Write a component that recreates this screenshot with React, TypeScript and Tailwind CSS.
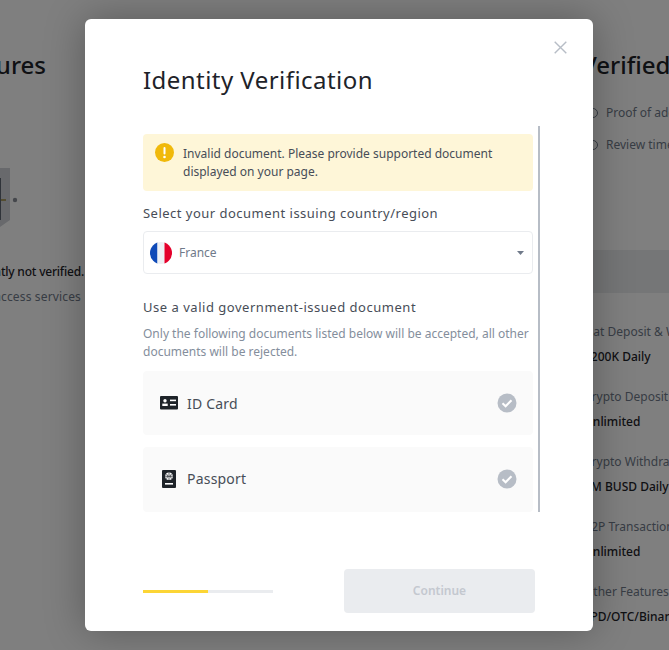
function Check() {
  return (
    <svg width="20" height="20" viewBox="0 0 20 20" className="shrink-0">
      <circle cx="10" cy="10" r="9.5" fill="#b7bdc6" />
      <path d="M5.5 10.2l3.1 3 5.9-6" fill="none" stroke="#fff" strokeWidth="2.1" />
    </svg>
  );
}

function DocRow({ icon, label, h }: { icon: React.ReactNode; label: string; h: string }) {
  return (
    <div className={`flex items-center rounded-[4px] bg-[#fafafa] pl-[17px] pr-[16px] shrink-0 ${h}`}>
      <span className="flex w-[18px] justify-center">{icon}</span>
      <span className="ml-[9px] flex-1 text-[14px] tracking-[0.2px] text-[#474d57]">{label}</span>
      <Check />
    </div>
  );
}

function Stat({ label, value }: { label: string; value: string }) {
  return (
    <div className="flex h-[65px] flex-col whitespace-nowrap">
      <span className="h-[25px] text-[12px] leading-[20px] text-[#707a8a]">{label}</span>
      <span className="text-[12px] font-medium leading-[20px] text-[#1e2329]">{value}</span>
    </div>
  );
}

function Bullet({ label }: { label: string }) {
  return (
    <span className="flex items-center gap-[8px]">
      <span className="h-[10px] w-[10px] shrink-0 rounded-full border border-[#707a8a]" />
      {label}
    </span>
  );
}

export default function App() {
  return (
    <div className="relative h-[650px] w-[669px] overflow-hidden bg-white font-['Noto_Sans','Liberation_Sans',sans-serif]">
      <div className="flex h-full justify-between">
        <div className="flex w-[85px] flex-col items-end overflow-hidden whitespace-nowrap">
          <h2 className="mr-[39px] mt-[49px] text-[24px] font-medium leading-[32px] text-[#1e2329]">Features</h2>
          <div className="mr-[67px] mt-[87px] h-[62px] w-[18px]">
            <svg width="18" height="62" viewBox="0 0 18 62">
              <path d="M0 0H10V52L0 59Z" fill="#d0d3d8" />
              <rect x="0" y="10" width="1" height="42" fill="#5e6673" />
              <rect x="1" y="31" width="5" height="2" fill="#a89a60" />
              <circle cx="15" cy="32" r="2.2" fill="#8a8f98" />
            </svg>
          </div>
          <p className="mr-[1px] mt-[32px] text-[12px] font-medium leading-[20px] tracking-[-0.2px] text-[#1e2329]">You are currently not verified.</p>
          <p className="mr-[4px] mt-[5px] text-[12px] leading-[20px] tracking-[0.15px] text-[#707a8a]">You can access services</p>
        </div>
        <div className="flex w-[110px] flex-col overflow-hidden whitespace-nowrap">
          <h2 className="ml-[23px] mt-[49px] text-[24px] font-medium leading-[32px] text-[#1e2329]">Verified</h2>
          <div className="ml-[29px] mt-[22px] flex flex-col gap-[12px] text-[12px] leading-[20px] text-[#707a8a]">
            <Bullet label="Proof of address" />
            <Bullet label="Review time" />
          </div>
          <div className="mt-[95px] h-[43px] w-full shrink-0 bg-[#eaecef]" />
          <div className="ml-[25px] mt-[29px] flex flex-col">
            <Stat label="Fiat Deposit & Withdraw" value="$200K Daily" />
            <Stat label="Crypto Deposit" value="Unlimited" />
            <Stat label="Crypto Withdrawal" value="8M BUSD Daily" />
            <Stat label="P2P Transaction" value="Unlimited" />
            <Stat label="Other Features" value="LPD/OTC/Binance" />
          </div>
        </div>
      </div>

      <div className="absolute inset-0 bg-black/50" />

      <div className="absolute left-[85px] top-[19px] flex h-[612px] w-[508px] flex-col rounded-[6px] bg-white pl-[58px] shadow-[0_0_40px_rgba(0,0,0,0.3)]">
        <button className="absolute right-[26px] top-[22px] text-[#b7bdc6]" aria-label="Close">
          <svg width="13" height="13" viewBox="0 0 13 13"><path d="M.7.7l11.6 11.6M12.3.7L.7 12.3" stroke="currentColor" strokeWidth="1.4" fill="none" /></svg>
        </button>
        <h1 className="mt-[43px] h-[36px] text-[24px] font-normal leading-[36px] tracking-[0.45px] text-[#1e2329]">Identity Verification</h1>
        <div className="mt-[28px] flex h-[386px] w-[397px] flex-col overflow-hidden border-r-2 border-[#b7bdc6] pr-[5px] pt-[8px]">
          <div className="flex h-[57px] shrink-0 rounded-[4px] bg-[#fef6d8] pl-[12px] pr-[10px] pt-[9px]">
            <svg width="19" height="19" viewBox="0 0 19 19" className="shrink-0">
              <circle cx="9.5" cy="9.5" r="9.5" fill="#f0b90b" />
              <rect x="8.5" y="4" width="2" height="7.5" rx="1" fill="#fff" />
              <circle cx="9.5" cy="14" r="1.3" fill="#fff" />
            </svg>
            <p className="ml-[9px] mt-[2px] text-[12px] leading-[18px] text-[#474d57]">Invalid document. Please provide supported document displayed on your page.</p>
          </div>
          <p className="mt-[12px] text-[13px] leading-[20px] tracking-[0.48px] text-[#474d57]">Select your document issuing country/region</p>
          <div className="mt-[8px] flex h-[43px] shrink-0 items-center rounded-[4px] border border-[#eaecef] pl-[6px] pr-[8px]">
            <svg width="22" height="22" viewBox="0 0 22 22" className="shrink-0">
              <defs><clipPath id="flag"><circle cx="11" cy="11" r="11" /></clipPath></defs>
              <g clipPath="url(#flag)">
                <rect width="7.5" height="22" fill="#0f4ab8" />
                <rect x="7.5" width="7" height="22" fill="#eef0f4" />
                <rect x="14.5" width="7.5" height="22" fill="#e4002b" />
              </g>
            </svg>
            <span className="ml-[7px] flex-1 text-[12px] text-[#707a8a]">France</span>
            <svg width="7" height="4" viewBox="0 0 7 4"><path d="M0 0h7L3.5 4z" fill="#707a8a" /></svg>
          </div>
          <p className="mt-[23px] text-[13px] leading-[20px] tracking-[0.52px] text-[#474d57]">Use a valid government-issued document</p>
          <p className="mt-[8px] text-[12px] leading-[18px] text-[#848e9c]">Only the following documents listed below will be accepted, all other documents will be rejected.</p>
          <div className="mt-[10px] flex flex-col gap-[12px]">
            <DocRow
              h="h-[64px]"
              label="ID Card"
              icon={
                <svg width="18" height="14" viewBox="0 0 18 14">
                  <rect width="18" height="13.5" rx="1" fill="#1e2329" />
                  <circle cx="5" cy="4.8" r="1.7" fill="#fff" />
                  <rect x="2.3" y="7.6" width="5.4" height="2.4" fill="#fff" />
                  <rect x="10" y="3.6" width="6" height="1.6" fill="#fff" />
                  <rect x="10" y="8" width="6" height="1.6" fill="#fff" />
                </svg>
              }
            />
            <DocRow
              h="h-[65px] pb-[2px]"
              label="Passport"
              icon={
                <svg width="14" height="18" viewBox="0 0 14 18">
                  <rect width="14" height="18" rx="1" fill="#1e2329" />
                  <circle cx="7" cy="6.3" r="3.8" fill="#fff" />
                  <path d="M3.2 6.3h7.6M7 2.5v7.6M4.5 3.8q2.5 2.5 0 5M9.5 3.8q-2.5 2.5 0 5" stroke="#1e2329" strokeWidth="0.7" fill="none" />
                  <rect x="3" y="13" width="8" height="1.6" fill="#fff" />
                </svg>
              }
            />
          </div>
        </div>
        <div className="mt-[57px] flex w-[392px] items-center justify-between">
          <div className="h-[3px] w-[130px] bg-[#eaecef]">
            <div className="h-full w-[65px] bg-[#fcd535]" />
          </div>
          <button className="flex h-[44px] w-[191px] items-center justify-center rounded-[4px] bg-[#eaecef] text-[12px] font-semibold text-[#c4c8cf]">Continue</button>
        </div>
      </div>
    </div>
  );
}
